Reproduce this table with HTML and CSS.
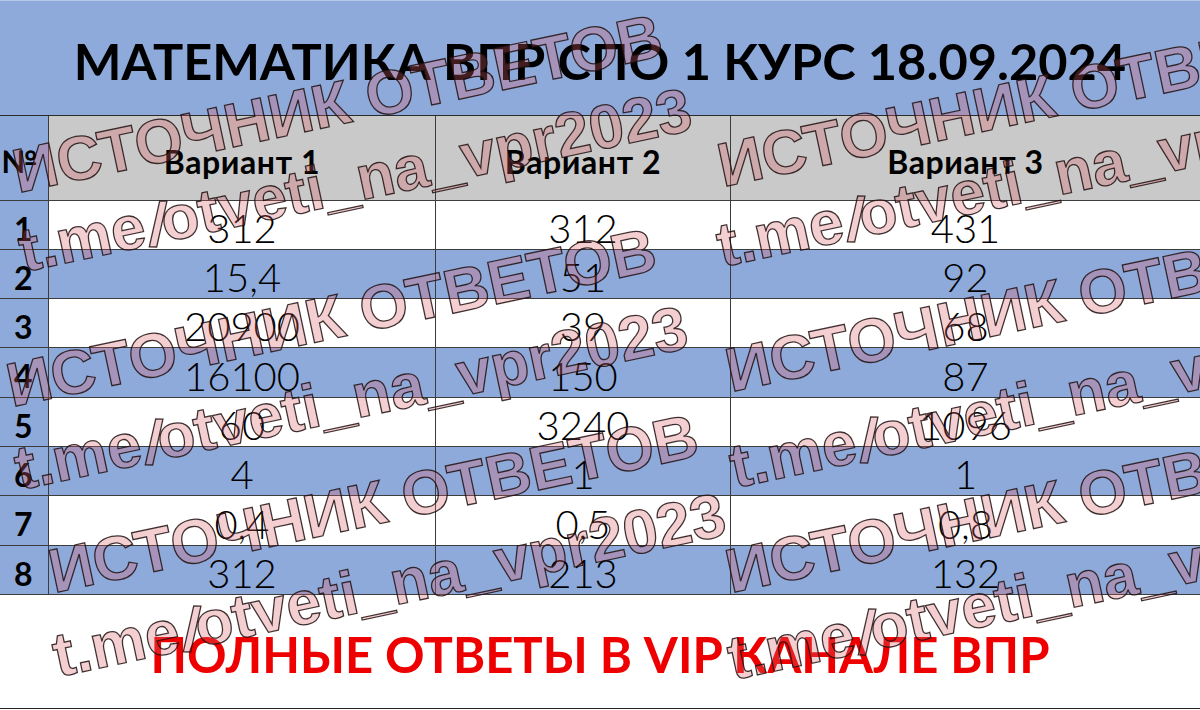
FILE: index.html
```html
<!DOCTYPE html>
<html lang="ru">
<head>
<meta charset="utf-8">
<title>МАТЕМАТИКА ВПР СПО 1 КУРС</title>
<link rel="stylesheet" href="styles.css">
</head>
<body>
<div class="sheet">
  <div class="title">МАТЕМАТИКА ВПР СПО 1 КУРС 18.09.2024</div>

  <div class="num head-num">№</div>
  <div class="hcell">Вариант 1</div>
  <div class="hcell">Вариант 2</div>
  <div class="hcell last">Вариант 3</div>

  <div class="num">1</div><div class="val">312</div><div class="val">312</div><div class="val last">431</div>
  <div class="num">2</div><div class="val alt">15,4</div><div class="val alt">51</div><div class="val alt last">92</div>
  <div class="num">3</div><div class="val">20900</div><div class="val">39</div><div class="val last">68</div>
  <div class="num">4</div><div class="val alt">16100</div><div class="val alt">150</div><div class="val alt last">87</div>
  <div class="num">5</div><div class="val">60</div><div class="val">3240</div><div class="val last">1096</div>
  <div class="num">6</div><div class="val alt">4</div><div class="val alt">1</div><div class="val alt last">1</div>
  <div class="num">7</div><div class="val">0,4</div><div class="val">0,5</div><div class="val last">0,8</div>
  <div class="num">8</div><div class="val alt">312</div><div class="val alt">213</div><div class="val alt last">132</div>

  <div class="footer">ПОЛНЫЕ ОТВЕТЫ В VIP КАНАЛЕ ВПР</div>

  <svg class="watermark" width="1200" height="710" viewBox="0 0 1200 710" xmlns="http://www.w3.org/2000/svg">
    <text class="wm" x="18" y="193" transform="rotate(-12 18 193)">ИСТОЧНИК ОТВЕТОВ</text>
    <text class="wm" x="24" y="272" transform="rotate(-12 24 272)">t.me<tspan class="slash" rotate="14">/</tspan>otveti_na_vpr2023</text>
    <text class="wm" x="12" y="407" transform="rotate(-12 12 407)">ИСТОЧНИК ОТВЕТОВ</text>
    <text class="wm" x="20" y="490" transform="rotate(-12 20 490)">t.me<tspan class="slash" rotate="14">/</tspan>otveti_na_vpr2023</text>
    <text class="wm" x="54" y="593" transform="rotate(-12 54 593)">ИСТОЧНИК ОТВЕТОВ</text>
    <text class="wm" x="58" y="677" transform="rotate(-12 58 677)">t.me<tspan class="slash" rotate="14">/</tspan>otveti_na_vpr2023</text>
    <text class="wm" x="723" y="187" transform="rotate(-12 723 187)">ИСТОЧНИК ОТВЕТОВ</text>
    <text class="wm" x="722" y="267" transform="rotate(-12 722 267)">t.me<tspan class="slash" rotate="14">/</tspan>otveti_na_vpr2023</text>
    <text class="wm" x="731" y="392" transform="rotate(-12 731 392)">ИСТОЧНИК ОТВЕТОВ</text>
    <text class="wm" x="735" y="488" transform="rotate(-12 735 488)">t.me<tspan class="slash" rotate="14">/</tspan>otveti_na_vpr2023</text>
    <text class="wm" x="731" y="593" transform="rotate(-12 731 593)">ИСТОЧНИК ОТВЕТОВ</text>
    <text class="wm" x="733" y="680" transform="rotate(-12 733 680)">t.me<tspan class="slash" rotate="14">/</tspan>otveti_na_vpr2023</text>
  </svg>
</div>
</body>
</html>
```
FILE: styles.css
```css
* { box-sizing: border-box; }

html, body {
  margin: 0;
  padding: 0;
  background: #ffffff;
}

.sheet {
  position: relative;
  width: 1200px;
  height: 710px;
  overflow: hidden;
  display: grid;
  grid-template-columns: 49px 387px 295px 469px;
  grid-template-rows: 116px 85px 49px 49px 49px 50px 49px 49px 50px 49px 114px;
  font-family: "Lato", "Liberation Sans", sans-serif;
  color: #000;
}

.title {
  grid-column: 1 / -1;
  background: #8eaadb;
  border-top: 1px solid #b9c8e6;
  border-bottom: 1px solid #2b2b2b;
  display: flex;
  align-items: center;
  justify-content: center;
  font-weight: 700;
  font-size: 50.5px;
  padding-top: 4px;
}

.num {
  background: #8eaadb;
  border-right: 1px solid #3c3c3c;
  border-bottom: 1px solid #3c3c3c;
  font-weight: 700;
  font-size: 32px;
  display: flex;
  align-items: center;
  padding-left: 14px;
  padding-top: 6px;
}

.head-num {
  padding-left: 1px;
  font-size: 31px;
  padding-top: 6px;
}

.hcell {
  background: #c9c9c9;
  border-right: 1px solid #3c3c3c;
  border-bottom: 1px solid #3c3c3c;
  display: flex;
  align-items: center;
  justify-content: center;
  font-weight: 700;
  font-size: 32px;
  letter-spacing: 0.6px;
  padding-top: 6px;
}

.val {
  background: #ffffff;
  border-right: 1px solid #3c3c3c;
  border-bottom: 1px solid #3c3c3c;
  display: flex;
  align-items: center;
  justify-content: center;
  font-weight: 300;
  font-size: 40px;
  padding-top: 6px;
}

.val.alt {
  background: #8eaadb;
}

.last {
  border-right: none;
}

.footer {
  grid-column: 1 / -1;
  background: #ffffff;
  border-bottom: 1px solid #222;
  display: flex;
  align-items: center;
  justify-content: center;
  color: #ee0000;
  font-weight: 700;
  font-size: 49px;
  padding-top: 4px;
}

.watermark {
  position: absolute;
  left: 0;
  top: 0;
  pointer-events: none;
}

.wm {
  font-family: "Liberation Sans", Arial, sans-serif;
  font-weight: 700;
  font-size: 62px;
  fill: rgba(220, 95, 105, 0.3);
  stroke: rgba(30, 15, 15, 0.85);
  stroke-width: 1.3px;
}
```
